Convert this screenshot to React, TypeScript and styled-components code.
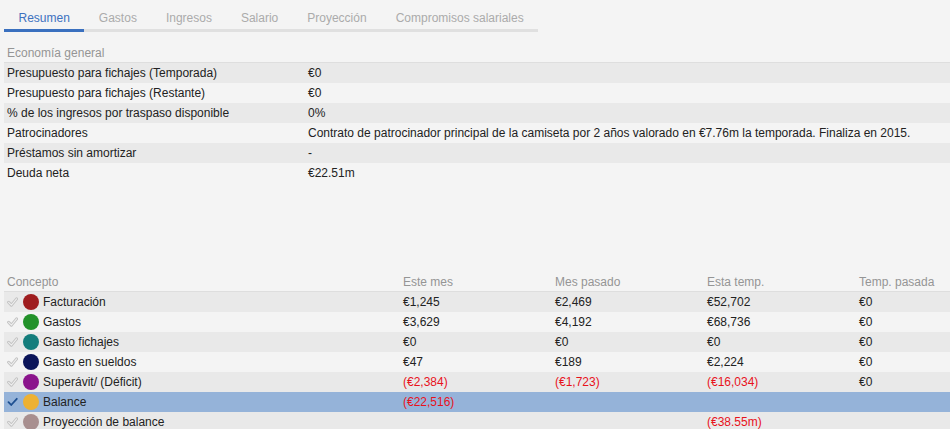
import React from "react";
import styled, { createGlobalStyle } from "styled-components";

const GlobalStyle = createGlobalStyle`
  html, body {
    margin: 0;
    padding: 0;
    background: #f4f4f4;
  }
  body {
    font-family: "Liberation Sans", Arial, sans-serif;
    font-size: 12px;
    color: #222;
  }
`;

const Page = styled.div`
  width: 950px;
  height: 429px;
  overflow: hidden;
  background: #f4f4f4;
`;

const TabBar = styled.div`
  display: inline-flex;
  margin-left: 4px;
  border-bottom: 3px solid #e0e0e0;
`;

const Tab = styled.div<{ $active?: boolean }>`
  padding: 10px 14.5px 3px;
  line-height: 16px;
  font-size: 12px;
  color: ${(p) => (p.$active ? "#3d72bf" : "#ababab")};
  border-bottom: 3px solid ${(p) => (p.$active ? "#3a70bf" : "transparent")};
  margin-bottom: -3px;
  white-space: nowrap;
`;

const Table = styled.div<{ $cols: string; $top: number }>`
  display: grid;
  grid-template-columns: ${(p) => p.$cols};
  margin: ${(p) => p.$top}px 0 0 4px;
`;

const HeadCell = styled.div`
  padding: 2px 0 0 3px;
  line-height: 18px;
  color: #959595;
  border-bottom: 1px solid #dedede;
  white-space: nowrap;
`;

const Row = styled.div<{ $tone: "dark" | "light" | "selected" }>`
  display: contents;
  & > div {
    background: ${(p) =>
      p.$tone === "selected" ? "#95b3d9" : p.$tone === "dark" ? "#e9e9e9" : "#f4f4f4"};
  }
`;

const Cell = styled.div<{ $neg?: boolean }>`
  height: 20px;
  line-height: 20px;
  padding-left: 3px;
  white-space: nowrap;
  overflow: hidden;
  color: ${(p) => (p.$neg ? "#e8121c" : "#222")};
`;

const ConceptCell = styled(Cell)`
  display: flex;
  align-items: center;
`;

const Dot = styled.span<{ $color: string }>`
  width: 16px;
  height: 16px;
  border-radius: 50%;
  background: ${(p) => p.$color};
  margin: 0 4px 0 5px;
  flex: 0 0 16px;
`;

const CheckIcon = ({ on }: { on?: boolean }) =>
  on ? (
    <svg width="11" height="10" viewBox="0 0 11 10">
      <path d="M1.5 5.2 L4.2 8 L9.8 1.8" fill="none" stroke="#1d4f91" strokeWidth="1.8" strokeLinecap="round" strokeLinejoin="round" />
    </svg>
  ) : (
    <svg width="11" height="10" viewBox="0 0 11 10">
      <path d="M1.6 5.3 L4.4 8.1 L9.6 1.9" fill="none" stroke="#c2c2c2" strokeWidth="3" strokeLinecap="round" strokeLinejoin="round" />
      <path d="M1.6 5.3 L4.4 8.1 L9.6 1.9" fill="none" stroke="#efefef" strokeWidth="1.1" strokeLinecap="round" strokeLinejoin="round" />
    </svg>
  );

const tabs = ["Resumen", "Gastos", "Ingresos", "Salario", "Proyección", "Compromisos salariales"];

const general = [
  ["Presupuesto para fichajes (Temporada)", "€0"],
  ["Presupuesto para fichajes (Restante)", "€0"],
  ["% de los ingresos por traspaso disponible", "0%"],
  ["Patrocinadores", "Contrato de patrocinador principal de la camiseta por 2 años valorado en €7.76m la temporada. Finaliza en 2015."],
  ["Préstamos sin amortizar", "-"],
  ["Deuda neta", "€22.51m"],
];

const concepts = [
  { name: "Facturación", color: "#9f1d1f", vals: ["€1,245", "€2,469", "€52,702", "€0"] },
  { name: "Gastos", color: "#23922a", vals: ["€3,629", "€4,192", "€68,736", "€0"] },
  { name: "Gasto fichajes", color: "#147d7c", vals: ["€0", "€0", "€0", "€0"] },
  { name: "Gasto en sueldos", color: "#0b1459", vals: ["€47", "€189", "€2,224", "€0"] },
  { name: "Superávit/ (Déficit)", color: "#8b148c", vals: ["(€2,384)", "(€1,723)", "(€16,034)", "€0"] },
  { name: "Balance", color: "#edb133", vals: ["(€22,516)", "", "", ""], selected: true },
  { name: "Proyección de balance", color: "#a88f8f", vals: ["", "", "(€38.55m)", ""] },
];

export default function App() {
  return (
    <Page>
      <GlobalStyle />
      <TabBar>
        {tabs.map((t, i) => (
          <Tab key={t} $active={i === 0}>
            {t}
          </Tab>
        ))}
      </TabBar>

      <Table $cols="301px 645px" $top={10}>
        <HeadCell>Economía general</HeadCell>
        <HeadCell />
        {general.map(([label, value], i) => (
          <Row key={label} $tone={i % 2 === 0 ? "dark" : "light"}>
            <Cell>{label}</Cell>
            <Cell>{value}</Cell>
          </Row>
        ))}
      </Table>

      <Table $cols="396px 152px 152px 152px 94px" $top={88}>
        <HeadCell>Concepto</HeadCell>
        <HeadCell>Este mes</HeadCell>
        <HeadCell>Mes pasado</HeadCell>
        <HeadCell>Esta temp.</HeadCell>
        <HeadCell>Temp. pasada</HeadCell>
        {concepts.map((c, i) => (
          <Row key={c.name} $tone={c.selected ? "selected" : i % 2 === 0 ? "dark" : "light"}>
            <ConceptCell>
              <CheckIcon on={c.selected} />
              <Dot $color={c.color} />
              {c.name}
            </ConceptCell>
            {c.vals.map((v, j) => (
              <Cell key={j} $neg={v.startsWith("(")}>
                {v}
              </Cell>
            ))}
          </Row>
        ))}
      </Table>
    </Page>
  );
}
